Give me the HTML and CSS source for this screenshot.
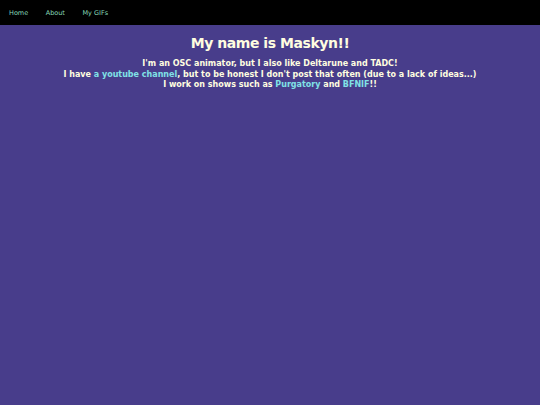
FILE: index.html
```html
<!DOCTYPE html>
<html>
<head>
<meta charset="utf-8">
<link rel="stylesheet" href="styles.css">
</head>
<body>
<nav class="topnav">
  <a href="#">Home</a>
  <a href="#">About</a>
  <a href="#">My GIFs</a>
</nav>
<main class="content">
  <h1 class="title">My name is Maskyn!!</h1>
  <p class="intro">I'm an OSC animator, but I also like Deltarune and TADC!<br>
  I have <a href="#">a youtube channel</a>, but to be honest I don't post that often (due to a lack of ideas...)<br>
  I work on shows such as <a href="#">Purgatory</a> and <a href="#">BFNIF</a>!!</p>
</main>
</body>
</html>
```

FILE: styles.css
```css
html, body {
  margin: 0;
  padding: 0;
}
body {
  background: #483d8b;
  font-family: Verdana, "DejaVu Sans", sans-serif;
  color: #fffde0;
  min-height: 405px;
}
.topnav {
  background: #000;
  height: 25px;
  display: flex;
  align-items: center;
  gap: 17.5px;
  padding: 0 9px;
}
.topnav a {
  color: #86d8b8;
  text-decoration: none;
  font-size: 6.5px;
}
.content {
  text-align: center;
}
.title {
  font-size: 14px;
  letter-spacing: -0.45px;
  margin: 10px 0 8px;
}
.intro {
  font-size: 8px;
  font-weight: bold;
  line-height: 10.5px;
  margin: 0;
}
.intro a {
  color: #80e2e6;
  text-decoration: none;
}
```
